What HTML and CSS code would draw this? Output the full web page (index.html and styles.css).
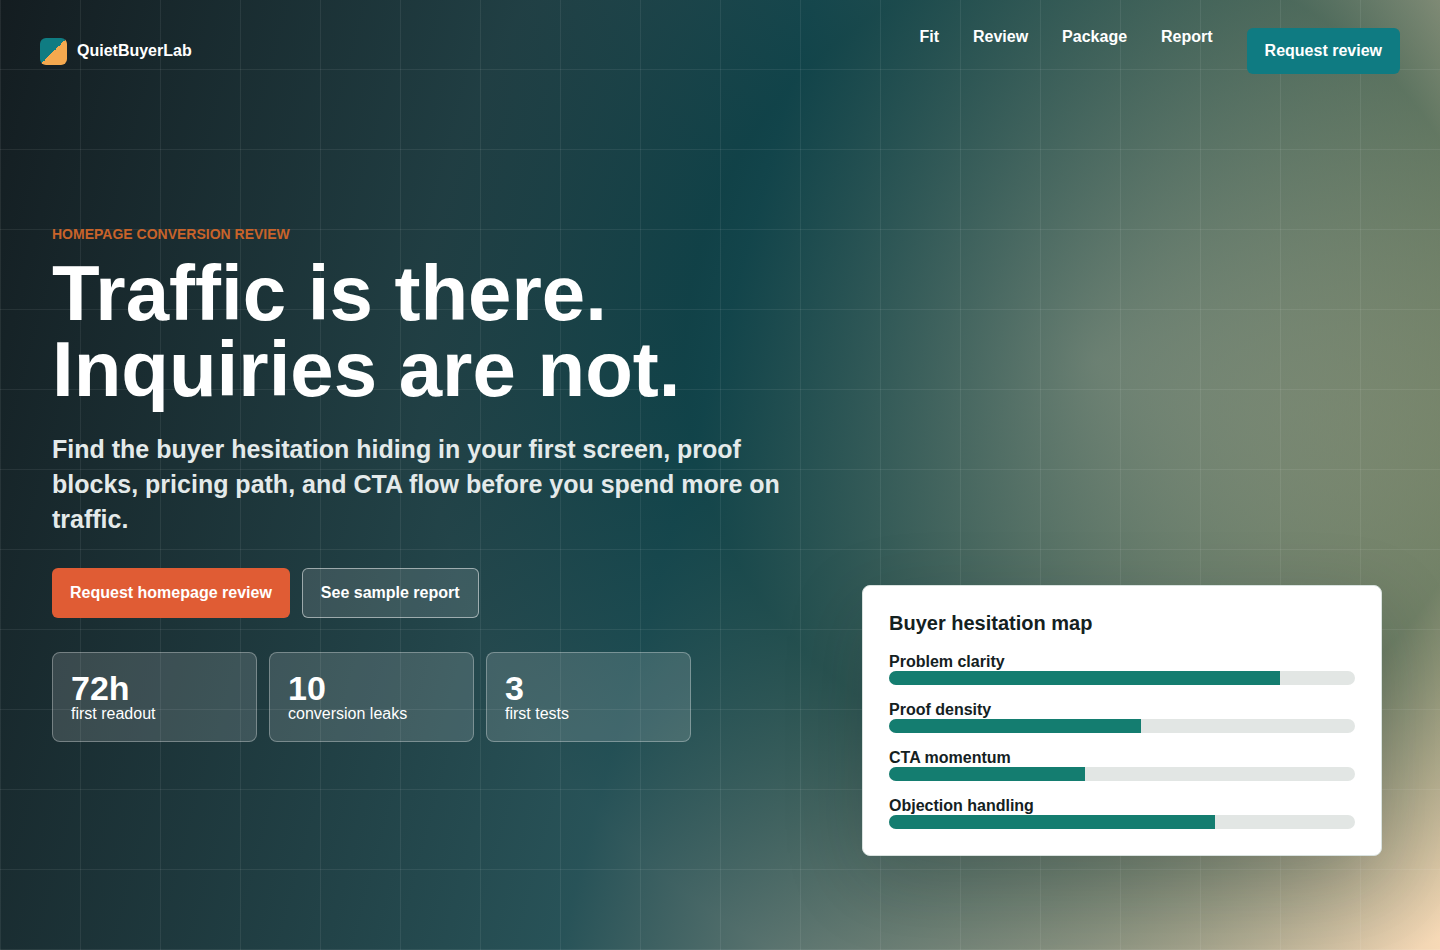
FILE: index.html
```html
<!DOCTYPE html>
<html lang="en">
<head>
<meta charset="utf-8">
<meta name="viewport" content="width=device-width, initial-scale=1">
<title>QuietBuyerLab</title>
<link rel="stylesheet" href="styles.css">
</head>
<body>
<div class="hero">
  <header class="topbar">
    <a class="brand" href="#top"><span class="brand-mark"></span>QuietBuyerLab</a>
    <nav class="nav" aria-label="Main">
      <a href="#fit">Fit</a>
      <a href="#review">Review</a>
      <a href="#package">Package</a>
      <a href="#report">Report</a>
      <a class="nav-cta" href="#request">Request review</a>
    </nav>
  </header>
  <main class="content">
    <section class="copy">
      <p class="eyebrow">Homepage conversion review</p>
      <h1>Traffic is there. Inquiries are not.</h1>
      <p class="lead">Find the buyer hesitation hiding in your first screen, proof blocks, pricing path, and CTA flow before you spend more on traffic.</p>
      <div class="actions">
        <a class="btn btn-primary" href="#request">Request homepage review</a>
        <a class="btn btn-ghost" href="#report">See sample report</a>
      </div>
      <div class="stats">
        <div class="stat"><strong>72h</strong><span>first readout</span></div>
        <div class="stat"><strong>10</strong><span>conversion leaks</span></div>
        <div class="stat"><strong>3</strong><span>first tests</span></div>
      </div>
    </section>
    <aside class="map">
      <h2>Buyer hesitation map</h2>
      <div class="meter"><span>Problem clarity</span><div class="track"><div class="fill" style="width:84%"></div></div></div>
      <div class="meter"><span>Proof density</span><div class="track"><div class="fill" style="width:54%"></div></div></div>
      <div class="meter"><span>CTA momentum</span><div class="track"><div class="fill" style="width:42%"></div></div></div>
      <div class="meter"><span>Objection handling</span><div class="track"><div class="fill" style="width:70%"></div></div></div>
    </aside>
  </main>
</div>
</body>
</html>
```
FILE: styles.css
```css
* { box-sizing: border-box; }
body {
  margin: 0;
  font-family: "Liberation Sans", Arial, sans-serif;
  font-size: 16px;
  color: #14211f;
}
a { color: inherit; text-decoration: none; }
h1, h2, p { margin: 0; }

.hero {
  min-height: 100vh;
  display: flex;
  flex-direction: column;
  color: #fff;
  background:
    linear-gradient(rgba(255, 255, 255, 0.07) 1px, transparent 1px) 0 69px / 80px 80px,
    linear-gradient(90deg, rgba(255, 255, 255, 0.07) 1px, transparent 1px) 0 0 / 80px 80px,
    linear-gradient(105deg, rgba(15, 24, 28, 0.98) 0%, rgba(14, 62, 68, 0.89) 48%, rgba(243, 172, 88, 0.42) 100%),
    radial-gradient(circle at 76% 38%, #b4d2cd 0%, #2a7078 33%, #fafafa 54%);
}

.topbar {
  display: flex;
  justify-content: space-between;
  align-items: center;
  padding: 28px 40px;
  font-weight: 700;
}
.brand { display: flex; align-items: center; gap: 10px; }
.brand-mark {
  width: 27px;
  height: 27px;
  border-radius: 6px;
  background: linear-gradient(135deg, #0f7c82 50%, #f4a94f 50%);
}
.nav { display: flex; gap: 34px; line-height: 18px; }
.nav-cta {
  padding: 14px 18px;
  border-radius: 6px;
  background: #0f7b82;
}

.content {
  flex: 1;
  display: grid;
  grid-template-columns: minmax(0, 1fr) 520px;
  gap: 64px;
  align-items: end;
  padding: 124px 58px 94px 52px;
}
.copy { align-self: start; }
.eyebrow {
  font-size: 14px;
  line-height: 16px;
  font-weight: 700;
  text-transform: uppercase;
  color: #c8632a;
}
h1 {
  max-width: 740px;
  margin-top: 13px;
  font-size: 78px;
  line-height: 76px;
}
.lead {
  max-width: 740px;
  margin-top: 25px;
  font-size: 25px;
  line-height: 35px;
  font-weight: 700;
  color: #e4eaea;
}
.actions { display: flex; gap: 12px; margin-top: 31px; }
.btn {
  padding: 16px 18px;
  border-radius: 6px;
  line-height: 18px;
  font-weight: 700;
}
.btn-primary { background: #e05c34; }
.btn-ghost {
  padding: 15px 18px;
  border: 1px solid rgba(255, 255, 255, 0.5);
  background: rgba(255, 255, 255, 0.12);
}
.stats {
  display: grid;
  grid-template-columns: repeat(3, minmax(0, 205px));
  gap: 12px;
  margin-top: 34px;
}
.stat {
  display: flex;
  flex-direction: column;
  padding: 18px;
  border: 1px solid rgba(255, 255, 255, 0.3);
  border-radius: 8px;
  background: rgba(255, 255, 255, 0.14);
}
.stat strong { font-size: 34px; line-height: 34px; }
.stat span { line-height: 18px; }

.map {
  padding: 26px;
  border: 1px solid #d9e2df;
  border-radius: 8px;
  background: #fff;
  color: #14211f;
  box-shadow: 0 24px 80px rgba(16, 24, 28, 0.18);
}
.map h2 { margin-bottom: 18px; font-size: 20px; line-height: 23px; }
.meter { font-weight: 700; line-height: 18px; }
.meter + .meter { margin-top: 16px; }
.track {
  height: 14px;
  border-radius: 7px;
  overflow: hidden;
  background: #e2e6e4;
}
.fill { height: 100%; background: #147d70; }
```
